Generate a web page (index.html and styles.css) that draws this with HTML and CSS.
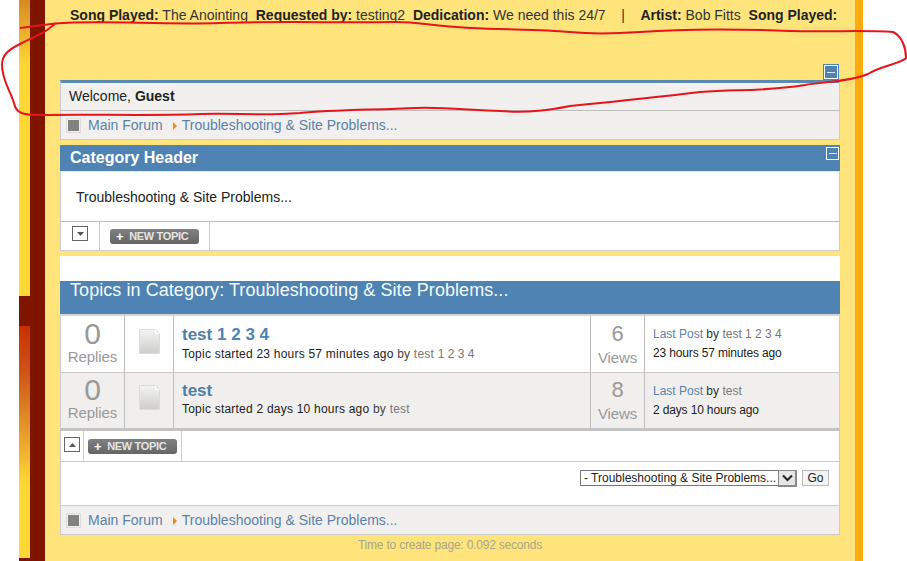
FILE: index.html
```html
<!DOCTYPE html>
<html lang="en">
<head>
<meta charset="utf-8">
<title>Troubleshooting &amp; Site Problems</title>
<link rel="stylesheet" href="styles.css">
</head>
<body>
<div class="page">
  <div class="strip"><div class="s1"></div><div class="s2"></div><div class="s3"></div><div class="s4"></div></div>
  <div class="dark"></div>
  <main class="main">
    <div class="ticker"><b>Song Played:</b> The Anointing&nbsp; <b>Requested by:</b> testing2&nbsp; <b>Dedication:</b> We need this 24/7 &nbsp; &nbsp;|&nbsp; &nbsp; <b>Artist:</b> Bob Fitts&nbsp; <b>Song Played:</b></div>
    <div class="collapse-row"><span class="toggle outer"><i></i></span></div>
    <div class="welcome">Welcome, <b>Guest</b></div>
    <div class="crumbs">
      <span class="home"></span><a class="main-link">Main Forum</a><span class="tri"></span><a>Troubleshooting &amp; Site Problems...</a>
    </div>
    <div class="cat-head"><span>Category Header</span><span class="toggle"><i></i></span></div>
    <div class="cat-body">Troubleshooting &amp; Site Problems...</div>
    <div class="bar bar-top">
      <div class="bar-arrow wide"><span class="arrowbox"><svg width="7" height="4" viewBox="0 0 7 4"><path d="M0 0h7L3.500 4z" fill="#555"/></svg></span></div>
      <div class="bar-btn wide"><span class="newtopic"><b>+</b>NEW TOPIC</span></div>
    </div>
    <div class="gap"></div>
    <div class="topics-head">Topics in Category: Troubleshooting &amp; Site Problems...</div>
    <div class="row">
      <div class="count replies"><strong>0</strong><span>Replies</span></div>
      <div class="icon"><svg width="21" height="25" viewBox="0 0 21 25"><defs><linearGradient id="doc" x1="0" y1="0" x2="0" y2="1"><stop offset="0" stop-color="#f3f3f1"/><stop offset="1" stop-color="#cfcecb"/></linearGradient></defs><path d="M.5.5h16l4 4v20H.5z" fill="url(#doc)" stroke="#dddcd9"/><path d="M16.500.5v4h4" fill="none" stroke="#fff"/></svg></div>
      <div class="topic">
        <div class="title"><a>test</a> <a class="pg">1</a> <a class="pg">2</a> <a class="pg">3</a> <a class="pg">4</a></div>
        <div class="meta">Topic started 23 hours 57 minutes ago <span>by</span> <em>test</em> <em class="pages">1 2 3 4</em></div>
      </div>
      <div class="count views"><strong>6</strong><span>Views</span></div>
      <div class="last"><div><a>Last Post</a> by <em>test</em> <em>1 2 3 4</em></div><div class="when">23 hours 57 minutes ago</div></div>
    </div>
    <div class="row alt">
      <div class="count replies"><strong>0</strong><span>Replies</span></div>
      <div class="icon"><svg width="21" height="25" viewBox="0 0 21 25"><path d="M.5.5h16l4 4v20H.5z" fill="url(#doc)" stroke="#dddcd9"/><path d="M16.500.5v4h4" fill="none" stroke="#fff"/></svg></div>
      <div class="topic">
        <div class="title"><a>test</a></div>
        <div class="meta">Topic started 2 days 10 hours ago <span>by</span> <em>test</em></div>
      </div>
      <div class="count views"><strong>8</strong><span>Views</span></div>
      <div class="last"><div><a>Last Post</a> by <em>test</em></div><div class="when">2 days 10 hours ago</div></div>
    </div>
    <div class="bar bar-bottom">
      <div class="bar-arrow"><span class="arrowbox"><svg width="7" height="4" viewBox="0 0 7 4"><path d="M0 4h7L3.500 0z" fill="#555"/></svg></span></div>
      <div class="bar-btn"><span class="newtopic"><b>+</b>NEW TOPIC</span></div>
    </div>
    <div class="jump">
      <span class="select-wrap">
        <select class="jump-select"><option>- Troubleshooting &amp; Site Problems...</option></select>
        <span class="select-arrow"><svg width="11" height="8" viewBox="0 0 11 8"><path d="M1 1.500l4.500 4.500L10 1.500" fill="none" stroke="#222" stroke-width="2"/></svg></span>
      </span>
      <button class="go" type="button">Go</button>
    </div>
    <div class="crumbs last-crumbs">
      <span class="home"></span><a class="main-link">Main Forum</a><span class="tri"></span><a>Troubleshooting &amp; Site Problems...</a>
    </div>
    <div class="timer">Time to create page: 0.092 seconds</div>
  </main>
  <div class="orange"></div>
</div>
<svg class="scribble" width="907" height="561" viewBox="0 0 907 561" aria-hidden="true">
  <path d="M20 28 L55 23.500 C100 20 160 25 220 23 C280 21 340 23 395 22 C420 22 430 26 470 28 C510 30 540 29 570 32 C590 34 610 34 640 32 C680 29 740 29 790 31 C830 32 870 30 893 32 C902 36 906 48 906 58 C900 64 880 66 868 74 C850 82 820 82 805 85 C760 92 740 89 700 92 C650 98 610 102 570 106 C550 110 530 113 500 111 C470 110 440 107 417 108 C370 110 330 110 300 113 C260 116 240 113 200 114 C150 116 90 114 40 115 C22 115 16 113 14 103 C10 90 2 80 2 65 C2 55 8 50 20 44 C35 36 42 34 47 30 L55 24" fill="none" stroke="#e8141c" stroke-width="2" stroke-linejoin="round"/>
</svg>
</body>
</html>
```
FILE: styles.css
```css
* { box-sizing: border-box; }
html, body { margin: 0; padding: 0; background: #fff; }
body {
  height: 561px;
  overflow: hidden;
  position: relative;
  font-family: "Liberation Sans", Arial, sans-serif;
  color: #222;
}
a { color: #5b82aa; }
em { font-style: normal; color: #777; }

.page { display: flex; height: 561px; margin-left: 19px; width: 844px; }
.strip { width: 11px; display: flex; flex-direction: column; flex: none; }
.s1 { height: 296px; background: linear-gradient(#d88a22 0, #fdd835 66px, #fdd835 100%); }
.s2 { height: 30px; background: #7f1500; }
.s3 { height: 232px; background: linear-gradient(#c83000 0, #d0581a 50px, #e8a02a 110px, #fdd835 158px, #fdd835 100%); }
.s4 { height: 3px; background: #7f1500; }
.dark { width: 15px; flex: none; background: #7f1500; }
.orange { width: 8px; flex: none; background: #fdab0d; }
.main { flex: 1; background: #ffe47c; padding: 0 15px; display: flex; flex-direction: column; }

.ticker { height: 64px; padding: 7px 0 0 10px; font-size: 14px; line-height: 17px; white-space: nowrap; color: #333; }
.ticker b { color: #222; }

.collapse-row { height: 16px; display: flex; justify-content: flex-end; padding-right: 1px; }
.toggle { width: 13px; height: 13px; border: 1px solid #fff; display: flex; align-items: center; justify-content: center; background: #4f83b3; }
.toggle i { display: block; width: 8px; height: 1px; background: #dfe9f2; }
.toggle.outer { width: 16px; height: 16px; border: 1px solid #4f83b3; outline: 1px solid #fff; outline-offset: -2px; }

.welcome { height: 31px; border-top: 3px solid #5b8aae; border-left: 1px solid #ccc; border-right: 1px solid #ccc; border-bottom: 1px solid #bdbdbd; background: #f1f0ee; padding: 0 8px; font-size: 14px; line-height: 26px; }

.crumbs { height: 29px; flex: none; display: flex; align-items: center; background: #f1f0ee; border: 1px solid #ccc; border-top: 0; font-size: 14px; padding: 0 0 0 5px; }
.home { width: 15px; height: 15px; padding: 1px; background: #828282 content-box; border: 1px solid #dcdcda; flex: none; margin-right: 7px; }
.main-link { margin-right: 10px; }
.crumbs a { color: #5b82aa; }
.tri { width: 0; height: 0; border-left: 4px solid #ee8a1c; border-top: 4px solid transparent; border-bottom: 4px solid transparent; margin-right: 5px; margin-top: 2px; }

.cat-head { margin-top: 5px; height: 26px; flex: none; background: #4f83b3; color: #fff; display: flex; justify-content: space-between; align-items: center; padding: 0 0 0 10px; font-size: 16px; font-weight: bold; }
.cat-head .toggle { align-self: flex-start; margin: 2px 1px 0 0; }
.cat-body { height: 51px; flex: none; background: #fff; border: 1px solid #ccc; border-top: 1px solid #e3e8ec; border-bottom: 1px solid #bdbdbd; padding-left: 15px; font-size: 14px; line-height: 50px; color: #222; }

.bar { display: flex; flex: none; background: #fff; border: 1px solid #ccc; border-top: 0; }
.bar-top { height: 29px; }
.bar-arrow { width: 23px; border-right: 1px solid #ccc; padding: 6px 0 0 3px; display: flex; align-items: flex-start; }
.bar-arrow.wide { width: 39px; padding: 4px 0 0 11px; }
.arrowbox { width: 16px; height: 15px; border: 1px solid #666; background: #fff; display: flex; align-items: center; justify-content: center; }
.bar-btn { width: 98px; border-right: 1px solid #ccc; padding: 0 0 0 4px; display: flex; align-items: center; }
.bar-btn.wide { width: 110px; padding-left: 10px; }
.newtopic { width: 89px; height: 15px; border-radius: 3px; background: linear-gradient(#808080, #656565); color: #e4e4e4; font-size: 11px; font-weight: bold; line-height: 15px; white-space: nowrap; display: flex; align-items: center; padding-left: 6px; letter-spacing: -.35px; }
.newtopic b { font-size: 13px; margin-right: 6px; color: #fff; }

.gap { height: 5px; flex: none; }
.topics-head { height: 60px; flex: none; padding: 26px 0 0 10px; font-size: 18px; line-height: 17px; letter-spacing: .06px; color: #f4fbff; background: linear-gradient(#fff 0, #fff 25px, #4f83b3 25px); border-bottom: 2px solid #d5d5d5; background-clip: padding-box; }

.row { height: 57px; flex: none; display: flex; background: #fff; border-left: 1px solid #ccc; border-right: 1px solid #ccc; border-bottom: 1px solid #ccc; }
.row.alt { background: #f0efed; height: 58px; border-bottom: 3px solid #c4c4c4; }
.count { display: flex; flex-direction: column; align-items: center; color: #999; flex: none; border-right: 1px solid #bdbdbd; }
.count strong { font-weight: normal; font-size: 30px; line-height: 30px; margin-top: 3px; color: #999; }
.count span { font-size: 15px; line-height: 18px; margin-top: -1px; letter-spacing: -.1px; }
.alt .count strong { margin-top: 2px; }
.replies { width: 64px; }
.views { width: 55px; border-left: 1px solid #bdbdbd; }
.views strong { font-size: 22px; line-height: 22px; margin-top: 7px; }
.alt .views strong { margin-top: 6px; }
.views span { margin-top: 4px; }
.icon { width: 49px; flex: none; border-right: 1px solid #bdbdbd; display: flex; justify-content: center; padding-top: 13px; }
.alt .icon { padding-top: 12px; }
.topic { flex: 1; padding: 9px 0 0 8px; min-width: 0; }
.alt .topic { padding-top: 8px; }
.title { font-size: 17px; font-weight: bold; line-height: 20px; color: #4f83b3; }
.title a { color: #4f7fa8; }
.title .pg { color: #4f83b3; }
.meta { font-size: 12px; line-height: 16px; margin-top: 1px; color: #222; white-space: nowrap; letter-spacing: .22px; }
.alt .meta { margin-top: 0; }
.meta span { color: #444; }
.meta .pages { letter-spacing: 0; }
.last { width: 194px; flex: none; padding: 9px 0 0 8px; font-size: 12px; line-height: 19px; color: #333; }
.last a { color: #5b82aa; }
.when { letter-spacing: -.15px; color: #222; }

.bar-bottom { height: 31px; }
.jump { height: 43px; flex: none; background: #fff; border-left: 1px solid #ccc; border-right: 1px solid #ccc; display: flex; justify-content: flex-end; align-items: flex-start; gap: 5px; padding: 8px 10px 0 0; }
.select-wrap { position: relative; display: block; width: 217px; height: 16px; }
.jump-select { display: block; appearance: none; width: 217px; height: 16px; font-family: "Liberation Sans", Arial, sans-serif; font-size: 12px; line-height: 14px; padding: 0 0 0 3px; border: 1px solid #777; background: #fff; color: #222; border-radius: 0; }
.select-arrow { position: absolute; right: 0; top: 0; width: 19px; height: 17px; background: #e6e6e6; border: 1px solid #8a8a8a; border-right-width: 2px; border-bottom-width: 2px; display: flex; align-items: center; justify-content: center; }
.go { width: 27px; height: 16px; padding: 0; font-family: "Liberation Sans", Arial, sans-serif; font-size: 12px; line-height: 14px; background: #f4f4f4; border: 1px solid #bbb; color: #222; border-radius: 0; }
.last-crumbs { border-top: 1px solid #ccc; height: 30px; }

.timer { text-align: center; font-size: 12px; line-height: 14px; letter-spacing: -.2px; color: #a8a68c; margin-top: 3px; }

.scribble { position: absolute; left: 0; top: 0; pointer-events: none; }
```
